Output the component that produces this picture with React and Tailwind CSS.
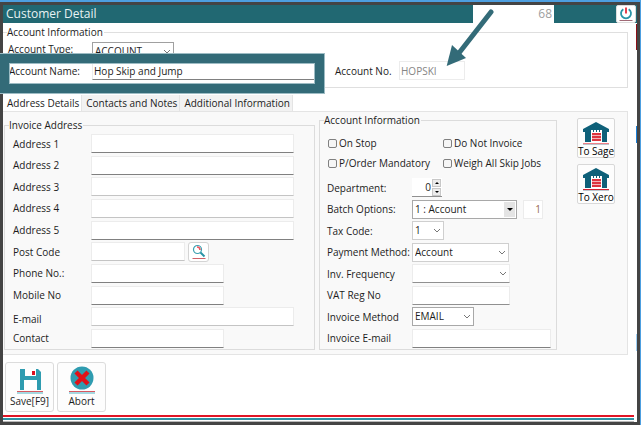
import React, { useState } from 'react';
import clsx from 'clsx';

const TABS = ['Address Details', 'Contacts and Notes', 'Additional Information'];

const ADDRESS_FIELDS = [
  { id: 'address1', label: 'Address 1', size: 'full' },
  { id: 'address2', label: 'Address 2', size: 'full' },
  { id: 'address3', label: 'Address 3', size: 'full', soft: true },
  { id: 'address4', label: 'Address 4', size: 'full', soft: true },
  { id: 'address5', label: 'Address 5', size: 'full' },
  { id: 'postcode', label: 'Post Code', size: 'small', soft: true, lookup: true },
  { id: 'phone', label: 'Phone No.:', size: 'medium' },
  { id: 'mobile', label: 'Mobile No', size: 'medium' },
  { id: 'email', label: 'E-mail', size: 'full', soft: true, low: true },
  { id: 'contact', label: 'Contact', size: 'medium' },
];

const SIZES = {
  full: 'flex-1 mr-5',
  medium: 'w-[133px]',
  small: 'w-[94px]',
};

const TextField = ({ className, ...props }) => (
  <input
    type="text"
    className={clsx(
      'block h-[19px] min-w-0 border border-[#ececec] bg-white px-px outline-none',
      className
    )}
    {...props}
  />
);

const Chevron = () => (
  <svg viewBox="0 0 8 5" className="h-[5px] w-2" fill="none" stroke="#777">
    <path d="M1 1l3 3 3-3" />
  </svg>
);

const SelectField = ({ id, value, className, boxed }) => (
  <div className={clsx('relative h-[19px] border bg-white', className)}>
    <select
      id={id}
      defaultValue={value}
      className="block h-full w-full appearance-none bg-transparent pl-[2px] leading-[17px] outline-none"
    >
      <option>{value}</option>
    </select>
    {boxed ? (
      <span className="pointer-events-none absolute inset-y-px right-px flex w-[11px] items-center justify-center bg-[#e4e4e4]">
        <svg viewBox="0 0 6 3" className="h-[3px] w-[6px]">
          <path d="M0 0h6L3 3z" fill="#000" />
        </svg>
      </span>
    ) : (
      <span className="pointer-events-none absolute inset-y-0 right-[2px] flex items-center">
        <Chevron />
      </span>
    )}
  </div>
);

const CheckField = ({ id, label }) => (
  <div className="flex h-[14px] items-center gap-[2px]">
    <input
      id={id}
      type="checkbox"
      className="h-[9px] w-[9px] appearance-none rounded-[2px] border border-[#808080] bg-[#f6f6f6] checked:bg-[#216872]"
    />
    <label htmlFor={id} className="whitespace-nowrap">
      {label}
    </label>
  </div>
);

const FormRow = ({ id, label, children }) => (
  <div className="flex h-[19px] items-center">
    <label htmlFor={id} className="w-[85px] shrink-0 whitespace-nowrap">
      {label}
    </label>
    {children}
  </div>
);

const PowerIcon = () => (
  <svg viewBox="0 0 18 17" className="h-[17px] w-[18px] shrink-0" fill="none">
    <path d="M6.3 3.2a5 5 0 1 0 5.4 0" stroke="#2a95a8" strokeWidth="1.8" />
    <path d="M9 1.4v6" stroke="#e01020" strokeWidth="1.6" />
    <path d="M2.5 14.5h13" stroke="#a06a76" />
  </svg>
);

const LookupIcon = () => (
  <svg viewBox="0 0 18 18" className="h-[18px] w-[18px] shrink-0" fill="none">
    <circle cx="7.5" cy="6.5" r="4" stroke="#3a9fb0" strokeWidth="1.2" />
    <path d="M7 4a3 3 0 0 1 3 3" stroke="#ee5560" strokeWidth="1.6" />
    <path d="M10.5 9.5l4 4" stroke="#2a93a6" strokeWidth="2" />
    <path d="M2.5 15.5h13" stroke="#cf6068" />
  </svg>
);

const DepotIcon = ({ line }) => (
  <svg viewBox="0 0 28 24" className="h-6 w-7 shrink-0">
    <path d="M1 8L14 1l13 7v3h-2v10h-5V10H9v11H3V11H1z" fill="#0e6079" />
    <path d="M9 9h11v12H9z" fill="#fff" />
    <path d="M9 8h11v1H9zM11 9h1v2h-1zM14 9h1v2h-1zM17 9h1v2h-1z" fill="#0e6079" />
    <path d="M10 12h9v2h-9zM10 15h9v2h-9zM10 18h9v2h-9z" fill="#dc3540" />
    <path d="M10 14h9v1h-9zM10 17h9v1h-9z" fill="#f3b4b8" />
    <path d="M1 22h26v1H1z" fill={line} />
    <path d="M1 23h26v1H1z" fill="#bcc4cc" />
  </svg>
);

const SaveIcon = () => (
  <svg viewBox="0 0 28 26" className="h-[26px] w-7 shrink-0">
    <path d="M4 1h18l3 3v18H4z" fill="#2f9cb0" />
    <path d="M9 1h11v7H9z" fill="#fff" />
    <path d="M16 3h3v4h-3z" fill="#dc1020" />
    <path d="M8 12h13v10H8z" fill="#fff" />
    <path d="M1 23h26v1H1z" fill="#d85860" />
    <path d="M1 24h26v2H1z" fill="#a5d8e0" />
  </svg>
);

const AbortIcon = () => (
  <svg viewBox="0 0 28 28" className="h-7 w-7 shrink-0">
    <circle cx="14" cy="12" r="11.5" fill="#2f9cb0" />
    <path d="M8 6l12 12M20 6L8 18" stroke="#e01018" strokeWidth="4.4" />
    <path d="M1 25h26v1H1z" fill="#d85860" />
    <path d="M1 26h26v2H1z" fill="#a5d8e0" />
  </svg>
);

const DepotButton = ({ label, line }) => (
  <button
    type="button"
    className="flex h-10 w-[38px] flex-col items-center rounded-[2px] border border-[#d8d8d8] bg-[#fdfdfd] pt-[2px] leading-3 whitespace-nowrap text-black"
  >
    <DepotIcon line={line} />
    {label}
  </button>
);

const ActionButton = ({ label, children }) => (
  <button
    type="button"
    className="flex h-[50px] w-[49px] flex-col items-center justify-end rounded-[3px] border border-[#dcdcdc] bg-[#fdfdfd] pb-[3px] leading-[14px]"
  >
    {children}
    {label}
  </button>
);

const AccountHeader = () => (
  <div className="relative mt-[2px] mr-[6px]">
    <fieldset className="h-[63px] border-y border-r border-[#dfdfdf]">
      <legend className="ml-1 pr-px">Account Information</legend>
      <div className="flex h-[19px] items-center pl-[5px]">
        <label htmlFor="accountType" className="w-[84px]">
          Account Type:
        </label>
        <SelectField id="accountType" value="ACCOUNT" className="mt-[5px] w-[82px] border-[#a0a0a0]" />
      </div>
      <div className="mt-[3px] flex h-[19px] items-center pl-[6px]">
        <label htmlFor="accountName" className="w-[83px] whitespace-nowrap">
          Account Name:
        </label>
        <TextField
          id="accountName"
          defaultValue="Hop Skip and Jump"
          className="w-[224px] border-b-[#808080]"
        />
        <label htmlFor="accountNo" className="ml-[19px] w-[64px] whitespace-nowrap">
          Account No.
        </label>
        <TextField
          id="accountNo"
          defaultValue="HOPSKI"
          readOnly
          className="w-[66px] text-[#858585]"
        />
      </div>
    </fieldset>
    {/* callout around the account name */}
    <div className="pointer-events-none absolute top-[28px] -left-[3px] h-[41px] w-[325px] border border-l-0 border-[#9dbcc4]">
      <div className="h-full border-9 border-[#336b78]">
        <div className="h-full border border-[#9dbcc4]" />
      </div>
    </div>
  </div>
);

const InvoiceAddress = () => (
  <fieldset className="ml-px min-w-0 flex-1 border border-[#dcdcdc]">
    <legend className="ml-1 pr-px">Invoice Address</legend>
    <div className="flex h-[217px] flex-col justify-between pt-[2px] pb-px">
      {ADDRESS_FIELDS.map((field) => (
        <div
          key={field.id}
          className={clsx('flex h-[19px] pl-2', field.low ? 'items-end' : 'items-center')}
        >
          <label htmlFor={field.id} className="w-[78px] shrink-0">
            {field.label}
          </label>
          <TextField
            id={field.id}
            className={clsx(
              SIZES[field.size],
              field.soft ? 'border-b-[#c4c4c4]' : 'border-b-[#808080]'
            )}
          />
          {field.lookup && (
            <button
              type="button"
              aria-label="Find address"
              className="ml-[3px] flex h-5 w-[21px] items-center justify-center rounded-[3px] border border-[#d4d4d4] bg-white"
            >
              <LookupIcon />
            </button>
          )}
        </div>
      ))}
    </div>
  </fieldset>
);

const AccountOptions = () => (
  <fieldset className="ml-1 w-[238px] min-w-0 shrink-0 border border-[#dcdcdc]">
    <legend className="ml-1 pr-px">Account Information</legend>
    <div className="grid grid-cols-[115px_1fr] gap-y-[6px] pt-[9px] pl-2">
      <CheckField id="onStop" label="On Stop" />
      <CheckField id="doNotInvoice" label="Do Not Invoice" />
      <CheckField id="orderMandatory" label="P/Order Mandatory" />
      <CheckField id="weighAll" label="Weigh All Skip Jobs" />
    </div>
    <div className="mt-2 flex h-[171px] flex-col justify-between pb-px pl-[7px]">
      <FormRow id="department" label="Department:">
        <div className="flex h-[19px] w-[30px] items-center border-b border-[#909090] bg-white pr-px">
          <input
            id="department"
            type="text"
            defaultValue="0"
            className="w-[19px] min-w-0 text-right outline-none"
          />
          <div className="ml-px flex w-[9px] shrink-0 flex-col gap-px">
            <button type="button" aria-label="Increase" className="flex h-2 items-center justify-center border border-[#c8c8c8] bg-[#ececec]">
              <svg viewBox="0 0 4 2" className="h-[2px] w-1">
                <path d="M0 2h4L2 0z" />
              </svg>
            </button>
            <button type="button" aria-label="Decrease" className="flex h-2 items-center justify-center border border-[#c8c8c8] bg-[#ececec]">
              <svg viewBox="0 0 4 2" className="h-[2px] w-1">
                <path d="M0 0h4L2 2z" />
              </svg>
            </button>
          </div>
        </div>
      </FormRow>
      <FormRow id="batch" label="Batch Options:">
        <SelectField id="batch" value="1 : Account" boxed className="w-[105px] border-[#a8a8a8]" />
        <TextField
          aria-label="Batch number"
          defaultValue="1"
          className="ml-[6px] w-5 text-right text-[#9a6a50]"
        />
      </FormRow>
      <FormRow id="tax" label="Tax Code:">
        <SelectField id="tax" value="1" className="w-8 border-[#cfcfcf]" />
      </FormRow>
      <FormRow id="payment" label="Payment Method:">
        <SelectField id="payment" value="Account" className="w-[97px] border-[#cfcfcf]" />
      </FormRow>
      <FormRow id="frequency" label="Inv. Frequency">
        <SelectField id="frequency" value="" className="w-[98px] border-[#ececec] border-b-[#909090]" />
      </FormRow>
      <FormRow id="vat" label="VAT Reg No">
        <TextField id="vat" className="w-[98px] border-b-[#909090]" />
      </FormRow>
      <FormRow id="method" label="Invoice Method">
        <SelectField id="method" value="EMAIL" className="w-[62px] border-[#a8a8a8]" />
      </FormRow>
      <FormRow id="invoiceEmail" label="Invoice E-mail">
        <TextField id="invoiceEmail" className="mr-[5px] flex-1 border-b-[#808080]" />
      </FormRow>
    </div>
  </fieldset>
);

const App = () => {
  const [activeTab, setActiveTab] = useState(TABS[0]);

  return (
    <div className="min-h-screen border-t-2 border-r border-[#4d9fe0] bg-white font-['Open_Sans','Noto_Sans',sans-serif] text-[10px] leading-[14px] text-[#1c1c1c]">
      <div className="relative flex min-h-[423px] flex-col border-3 border-[#444]">
        <header className="flex h-[18px] bg-[#216872]">
          <h1 className="flex-1 pl-[3px] text-[12px] leading-[18px] text-[#e8f2f3]">Customer Detail</h1>
          <input
            type="text"
            aria-label="Customer number"
            defaultValue="68"
            readOnly
            className="w-[81px] bg-white pr-[2px] text-right text-[12px] text-[#a0a0a0] outline-none"
          />
          <button
            type="button"
            aria-label="Close"
            className="mr-px ml-[62px] flex w-5 items-center justify-center rounded-[2px] border border-[#ddd] bg-white"
          >
            <PowerIcon />
          </button>
        </header>

        <main className="mr-[3px]">
          <AccountHeader />

          <div role="tablist" className="mt-[7px] flex h-4">
            {TABS.map((tab) => (
              <button
                key={tab}
                type="button"
                role="tab"
                aria-selected={tab === activeTab}
                onClick={() => setActiveTab(tab)}
                className={clsx(
                  'border-r border-[#e4e4e4] pr-[2px] pl-1 whitespace-nowrap',
                  tab === activeTab ? 'bg-white' : 'bg-[#f2f2f2]'
                )}
              >
                {tab}
              </button>
            ))}
          </div>

          <div className="mr-[6px] flex items-end border-y border-r border-[#e4e4e4] bg-[#f9f9f9] pt-px pb-1">
            <InvoiceAddress />
            <AccountOptions />
            <div className="mr-3 ml-5 flex flex-col gap-[6px] self-start pt-[5px]">
              <DepotButton label="To Sage" line="#ee8088" />
              <DepotButton label="To Xero" line="#d02030" />
            </div>
          </div>

          <div className="mt-[7px] flex gap-[3px] pl-[2px]">
            <ActionButton label="Save[F9]">
              <SaveIcon />
            </ActionButton>
            <ActionButton label="Abort">
              <AbortIcon />
            </ActionButton>
          </div>
        </main>

        <footer className="mt-auto mr-[3px]">
          <div className="h-[2px] bg-[#e01525]" />
          <div className="mt-px h-[2px] bg-[#2f93a5]" />
          <div className="mt-px h-px bg-[#b8b8b8]" />
        </footer>

        {/* slivers of the window behind */}
        <div className="pointer-events-none absolute top-[19px] right-0 flex w-px flex-col">
          <span className="h-[26px] bg-[#8c1018]" />
          <span className="mt-[76px] h-[17px] bg-[#1a7fd8]" />
          <span className="mt-[191px] h-[17px] bg-[#9fd0f5]" />
        </div>

        {/* pointer to the account number */}
        <svg
          viewBox="0 0 50 58"
          className="pointer-events-none absolute top-[4px] left-[443px] h-[58px] w-[50px]"
        >
          <path d="M45 3L13 44" stroke="#336b78" strokeWidth="5" strokeLinecap="round" />
          <path d="M.7 57L6 36l14 13z" fill="#336b78" />
        </svg>
      </div>
    </div>
  );
};

export default App;
